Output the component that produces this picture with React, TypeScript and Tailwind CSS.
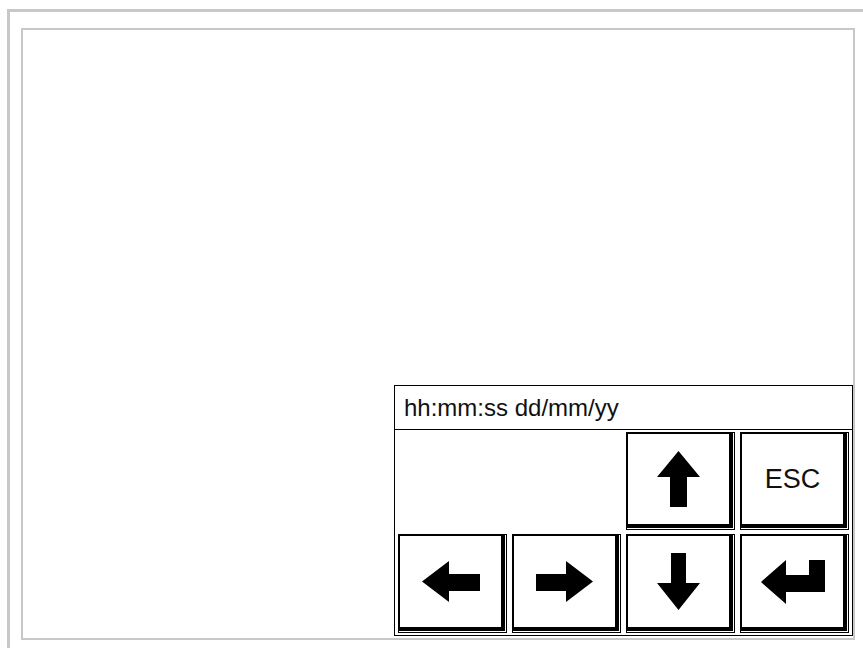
import React from "react";

const font = { fontFamily: '"Liberation Sans", Arial, sans-serif' };

function Key({ children }: { children?: React.ReactNode }) {
    return (
        <div className="border border-black bg-white flex">
            <div className="flex-1 mr-[1px] mb-[1px] border-l border-t border-r-[4px] border-b-[4px] border-black flex items-center justify-center">
                {children}
            </div>
        </div>
    );
}

const ArrowUp = () => (
    <svg width="43" height="56" viewBox="0 0 43 56"><polygon points="21.5,0 43,26 30,26 30,56 13,56 13,26 0,26" fill="#000" /></svg>
);
const ArrowDown = () => (
    <svg width="43" height="57" viewBox="0 0 43 57"><polygon points="14,0 29,0 29,30 43,30 21.5,57 0,30 14,30" fill="#000" /></svg>
);
const ArrowLeft = () => (
    <svg width="58" height="41" viewBox="0 0 58 41"><polygon points="0,20.5 27,0 27,13 58,13 58,30 27,30 27,41" fill="#000" /></svg>
);
const ArrowRight = () => (
    <svg width="57" height="41" viewBox="0 0 57 41"><polygon points="57,20.5 30,0 30,13 0,13 0,30 30,30 30,41" fill="#000" /></svg>
);
const ArrowEnter = () => (
    <svg width="64" height="44" viewBox="0 0 64 44"><polygon points="0,22 25,0 25,15 48,15 48,0 64,0 64,32 25,32 25,44" fill="#000" /></svg>
);

export default function App() {
    return (
        <div className="w-[863px] h-[648px] bg-white overflow-hidden" style={font}>
            <div className="ml-[7px] mt-[9px] w-[880px] h-[660px] border-[3px] border-[#c8c8c8]">
                <div className="ml-[11px] mt-[16px] w-[834px] h-[612px] border-2 border-[#c8c8c8] flex justify-end items-end pb-[2px]">
                    <div className="w-[459px] h-[251px] border border-black flex flex-col">
                        <div className="h-[44px] border-b border-black flex items-center pl-[9px] text-[24px] text-[#111]">
                            hh:mm:ss dd/mm/yy
                        </div>
                        <div className="flex-1 grid grid-cols-[109px_109px_109px_109px] grid-rows-[98px_99px] gap-x-[5px] gap-y-[4px] pl-[3px] pt-[2px]">
                            <div />
                            <div />
                            <Key><ArrowUp /></Key>
                            <Key><span className="text-[27px] text-[#111]">ESC</span></Key>
                            <Key><ArrowLeft /></Key>
                            <Key><ArrowRight /></Key>
                            <Key><ArrowDown /></Key>
                            <Key><ArrowEnter /></Key>
                        </div>
                    </div>
                </div>
            </div>
        </div>
    );
}
